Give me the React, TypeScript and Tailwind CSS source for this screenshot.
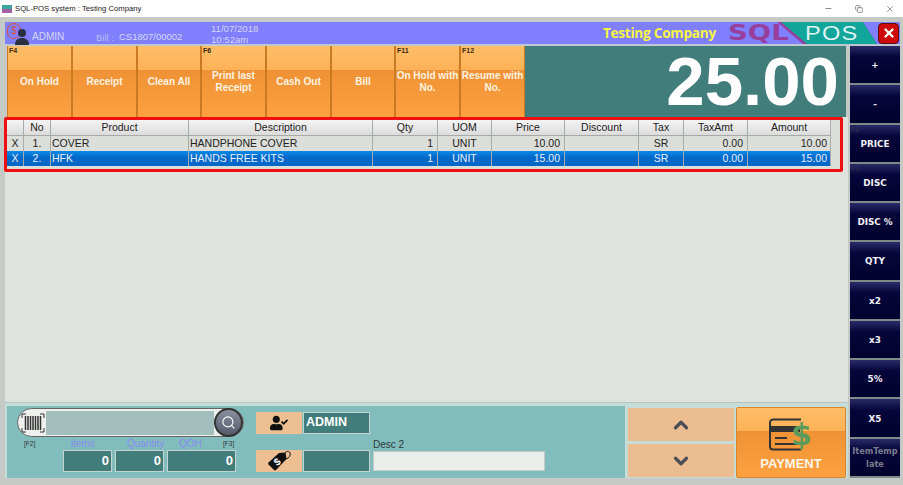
import { ChevronDown, ChevronUp, Copy, Minus, Search, X } from 'lucide-react';
import { FaUserCheck } from 'react-icons/fa';

const orangeButtons = [
  { key: 'F4', label: 'On Hold', w: 'w-[65px]' },
  { key: '', label: 'Receipt', w: 'w-[65px]' },
  { key: '', label: 'Clean All', w: 'w-[64px]' },
  { key: 'F6', label: 'Print last Receipt', w: 'w-[65px]' },
  { key: '', label: 'Cash Out', w: 'w-[65px]' },
  { key: '', label: 'Bill', w: 'w-[64px]' },
  { key: 'F11', label: 'On Hold with No.', w: 'w-[65px]' },
  { key: 'F12', label: 'Resume with No.', w: 'w-[65px]' },
];

const sideButtons = [
  { key: '', label: '+' },
  { key: '', label: '-' },
  { key: 'F8', label: 'PRICE' },
  { key: 'F9', label: 'DISC' },
  { key: '', label: 'DISC %' },
  { key: '', label: 'QTY' },
  { key: '', label: 'x2' },
  { key: '', label: 'x3' },
  { key: '', label: '5%' },
  { key: '', label: 'X5' },
];

const columns = [
  { title: '', align: 'text-center' },
  { title: 'No', align: 'text-center' },
  { title: 'Product', align: 'text-left pl-[1px]' },
  { title: 'Description', align: 'text-left pl-[1px]' },
  { title: 'Qty', align: 'text-right pr-[4px]' },
  { title: 'UOM', align: 'text-center' },
  { title: 'Price', align: 'text-right pr-[4px]' },
  { title: 'Discount', align: 'text-right pr-[4px]' },
  { title: 'Tax', align: 'text-center' },
  { title: 'TaxAmt', align: 'text-right pr-[4px]' },
  { title: 'Amount', align: 'text-right pr-[3px]' },
];

const rows = [
  ['X', '1.', 'COVER', 'HANDPHONE COVER', '1', 'UNIT', '10.00', '', 'SR', '0.00', '10.00'],
  ['X', '2.', 'HFK', 'HANDS FREE KITS', '1', 'UNIT', '15.00', '', 'SR', '0.00', '15.00'],
];

const gridCols = 'grid w-[824px] grid-cols-[17px_27px_138px_184px_65px_54px_73px_74px_45px_64px_83px]';

function OrangeButton({ k, label, w }: { k: string; label: string; w: string }) {
  return (
    <div className={`${w} relative h-full flex items-center justify-center text-center border-x border-[#c97a22] bg-[linear-gradient(#ffbe68,#ffb257_34%,#ee9235_34%,#fea141)]`}>
      {k && <span className="absolute left-px top-0 text-[7px] leading-[9px] font-bold text-[#3a2a10]">{k}</span>}
      <span className="text-[10px] leading-[12px] font-bold text-[#fdf3e2]">{label}</span>
    </div>
  );
}

function SideButton({ k, label, muted }: { k: string; label: string; muted?: boolean }) {
  return (
    <div className="relative flex-1 flex items-center justify-center text-center pt-[2px] border-b-2 border-[#7c8b88] bg-[linear-gradient(#2a2a68,#05053a_30%,#02022e)]">
      {k && <span className="absolute left-px top-0 text-[7px] leading-[9px] text-[#34344e]">{k}</span>}
      <span className={`leading-[13px] font-bold font-['DejaVu_Sans',sans-serif] ${muted ? 'text-[8.2px] text-[#7c7c8c]' : 'text-[8.8px] text-[#f1f1f6]'}`}>{label}</span>
    </div>
  );
}

function BarcodeIcon() {
  return (
    <svg width="24" height="20" viewBox="0 0 24 20" fill="none" stroke="#333">
      <path d="M1 5V1h4M19 1h4v4M1 15v4h4M19 19h4v-4" strokeWidth="1" />
      <path d="M4.5 3v14M7 3v14M9.5 3v14M12 3v14M14.5 3v14M17 3v14M19.5 3v14" strokeWidth="1.5" />
    </svg>
  );
}

function PriceTagIcon() {
  return (
    <svg width="24" height="22" viewBox="0 0 24 22">
      <path d="M1.5 12.5 12 3l6.5-.5 1 6.5L9 20a1.5 1.5 0 0 1-2 0L1.5 14.5a1.5 1.5 0 0 1 0-2Z" fill="#111" />
      <path d="M16 6c2-5 6-6 7-3s-2 6-5 6" fill="none" stroke="#111" strokeWidth="1" />
      <text x="7.5" y="15" fontSize="10" fontWeight="700" fill="#fff" fontFamily="Liberation Sans, sans-serif" transform="rotate(-40 10.5 12)">$</text>
    </svg>
  );
}

function CardIcon() {
  return (
    <svg width="44" height="33" viewBox="0 0 44 33" fill="none">
      <path d="M32 1.5H4a3 3 0 0 0-3 3v24a3 3 0 0 0 3 3h28" stroke="#333" strokeWidth="2" />
      <rect x="1" y="8" width="30" height="6" fill="#333" />
      <path d="M6 20h12M6 26h24" stroke="#333" strokeWidth="2.2" />
      <text x="22" y="27" fontSize="30" fontWeight="700" fill="#5c9a5c" fontFamily="DejaVu Sans, sans-serif">$</text>
    </svg>
  );
}

function UserBadge() {
  return (
    <div className="relative w-[24px] h-[23px] shrink-0">
      <div className="absolute left-0 top-px w-[14px] h-[16px] rounded-full border border-[#d9553a] text-[10px] leading-[14px] text-center text-[#d9553a]">$</div>
      <svg className="absolute left-[8px] top-[6px]" width="14" height="17" viewBox="0 0 14 17">
        <circle cx="7" cy="5" r="4" fill="#2b3040" />
        <path d="M0 17c0-5 3-7 7-7s7 2 7 7Z" fill="#2b3040" />
      </svg>
    </div>
  );
}

function CountBox({ value, w }: { value: string; w: string }) {
  return (
    <div className={`${w} h-[22px] bg-[#417d7b] border border-[#c5d3d0] flex items-center justify-end pr-[2px] text-[13px] font-bold text-white`}>
      {value}
    </div>
  );
}

export default function App() {
  return (
    <div className="w-[903px] h-[485px] bg-white flex flex-col overflow-hidden font-['Liberation_Sans',Arial,sans-serif]">
      {/* title bar */}
      <div className="h-[17px] shrink-0 flex items-center pl-[2px] bg-white">
        <div className="w-[10px] h-[8px] mr-[3px] bg-[linear-gradient(#3aa6a0_50%,#a060a8_50%)]" />
        <span className="text-[7.7px] text-[#222]">SQL-POS system : Testing Company</span>
        <div className="ml-auto flex items-center gap-[22px] pr-[8px] text-[#333]">
          <Minus size={9} strokeWidth={1.5} />
          <Copy size={8} strokeWidth={1.5} />
          <X size={10} strokeWidth={1.2} />
        </div>
      </div>

      {/* window */}
      <div className="flex-1 flex flex-col bg-[#c6cac7] pt-[5px] pb-[7px] pl-[5px] pr-[3px] min-h-0">
        {/* blue header */}
        <div className="h-[23px] shrink-0 flex items-center bg-[#7f7fff] text-[#d6d6f8] pl-[2px] pr-[1px] border-b border-[#b7c6dc]">
          <UserBadge />
          <span className="ml-px mt-[8px] w-[30px] text-[10px] leading-[12px]">ADMIN</span>
          <span className="ml-[34px] mt-[9px] w-[17px] text-[9.5px] leading-[12px] text-[#bdbdf0] whitespace-nowrap">Bill :</span>
          <span className="ml-[6px] mt-[8px] w-[92px] text-[9.5px] leading-[12px]">CS1807/00002</span>
          <div className="text-[9.6px] leading-[11px] mt-[2px]">
            <div>11/07/2018</div>
            <div>10:52am</div>
          </div>
          <span className="ml-auto mr-[12px] text-[13.7px] font-bold text-[#f5f542] font-['Open_Sans',sans-serif] tracking-[-0.3px]">Testing Company</span>
          <div className="flex items-center mr-[1px] h-[22px]">
            <span className="relative z-10 w-[49px] origin-left scale-x-[1.25] text-[22px] font-bold text-[#983f9c] leading-[22px] whitespace-nowrap font-['DejaVu_Sans',sans-serif]">SQL</span>
            <div className="h-[22px] w-[100px] bg-[#983f9c] [clip-path:polygon(0_0,86%_0,100%_100%,26%_100%)]">
              <div className="h-full w-full pl-[28px] flex items-center bg-[#12a59a] [clip-path:polygon(4%_0,100%_0,100%_100%,30%_100%)]">
                <span className="origin-left scale-x-[1.18] text-[20px] leading-[22px] text-[#dff3f3] tracking-[1px]">POS</span>
              </div>
            </div>
          </div>
          <div className="w-[21px] h-[21px] rounded-[4px] bg-[#cf0a0a] border border-[#5a1010] flex items-center justify-center text-white">
            <X size={14} strokeWidth={4} />
          </div>
        </div>

        <div className="flex-1 flex min-h-0 gap-[2px] pt-px">
          {/* main column */}
          <div className="w-[843px] flex flex-col">
            {/* buttons and total */}
            <div className="h-[71px] shrink-0 flex pl-[2px] pr-[2px]">
              {orangeButtons.map((b) => (
                <OrangeButton key={b.label} k={b.key} label={b.label} w={b.w} />
              ))}
              <div className="flex-1 bg-[#417d7b] flex items-center justify-end pr-[7px]">
                <span className="text-[69px] leading-[71px] font-bold text-white">25.00</span>
              </div>
            </div>

            {/* item area */}
            <div className="flex-1 bg-[#e0e2dd] border-b border-[#b8c4c0] min-h-0">
              <div className="-ml-px border-[3px] border-[#ee1010] rounded-[2px] w-[839px] h-[55px] bg-[#dcdeda] text-[10.5px] leading-[15px] text-[#222]">
                <div className={`${gridCols} h-[16px] border-b border-[#a8aaa8] bg-[linear-gradient(#f4f4f4,#dcdcdc)]`}>
                  {columns.map((c, i) => (
                    <div key={i} className="border-r border-[#a8aca8] text-center">
                      {c.title}
                    </div>
                  ))}
                </div>
                {rows.map((r, ri) => (
                  <div key={ri} className={`${gridCols} h-[15px] ${ri === 1 ? 'bg-[linear-gradient(#0a8ae8,#0468c8_45%,#0468c8)] text-[#e6f0fa]' : 'bg-[#dcdeda]'}`}>
                    {r.map((v, i) => (
                      <div key={i} className={`${columns[i].align} border-r border-[#a8aca8] whitespace-nowrap`}>
                        {v}
                      </div>
                    ))}
                  </div>
                ))}
              </div>
            </div>

            {/* bottom bar */}
            <div className="h-[75px] shrink-0 pt-[3px] flex gap-[3px] pl-[2px] bg-[#c5dcd9]">
              <div className="w-[618px] h-[72px] bg-[#81bdbc] flex pl-[10px] pt-[2px]">
                <div className="w-[227px] shrink-0">
                  <div className="h-[29px] rounded-full bg-[#eef0ee] border border-[#666] flex items-center pl-[3px]">
                    <BarcodeIcon />
                    <div className="ml-px w-[168px] h-[24px] bg-[#a3bfbd]" />
                    <div className="ml-auto w-[29px] h-[29px] rounded-full bg-[linear-gradient(#8a90a0,#565b6a)] border-[2px] border-[#333] flex items-center justify-center text-white">
                      <Search size={15} strokeWidth={1.8} />
                    </div>
                  </div>
                  <div className="flex h-[13px] items-center">
                    <span className="ml-[7px] w-[47px] text-[6.5px] leading-[8px] text-[#333]">[F2]</span>
                    <span className="w-[56px] text-[10px] leading-[12px] text-[#8a8af0]">items</span>
                    <span className="w-[52px] text-[10px] leading-[12px] text-[#8a8af0]">Quantity</span>
                    <span className="w-[44px] text-[10px] leading-[12px] text-[#8a8af0]">QOH</span>
                    <span className="text-[6.5px] leading-[8px] text-[#333]">[F3]</span>
                  </div>
                  <div className="flex gap-[3px] pl-[46px]">
                    <CountBox value="0" w="w-[49px]" />
                    <CountBox value="0" w="w-[49px]" />
                    <CountBox value="0" w="w-[69px]" />
                  </div>
                </div>

                <div className="ml-[12px] w-[115px] shrink-0 flex flex-col pt-[4px]">
                  <div className="flex">
                    <div className="w-[46px] h-[22px] bg-[#edbf93] flex items-center justify-center text-[#111]">
                      <FaUserCheck size={18} />
                    </div>
                    <div className="ml-px w-[67px] h-[22px] bg-[#417d7b] border border-[#c5d3d0] pl-[2px] text-[12.5px] leading-[18px] font-bold text-white">ADMIN</div>
                  </div>
                  <div className="flex mt-[16px]">
                    <div className="w-[46px] h-[22px] bg-[#edbf93] flex items-center justify-center">
                      <PriceTagIcon />
                    </div>
                    <div className="ml-px w-[67px] h-[22px] bg-[#417d7b] border border-[#c5d3d0]" />
                  </div>
                </div>

                <div className="ml-[2px] w-[172px] pt-[31px]">
                  <div className="text-[10px] leading-[12px] text-[#2c3a3a]">Desc 2</div>
                  <div className="h-[20px] bg-[#e9eeea] border border-[#c4cac6]" />
                </div>
              </div>

              <div className="w-[106px] flex flex-col gap-[3px] pt-[2px]">
                <div className="h-[33px] bg-[#ecbd91] flex items-center justify-center text-[#4a4f55]">
                  <ChevronUp size={22} strokeWidth={3.5} />
                </div>
                <div className="h-[33px] bg-[#ecbd91] flex items-center justify-center text-[#4a4f55]">
                  <ChevronDown size={22} strokeWidth={3.5} />
                </div>
              </div>

              <div className="-ml-px w-[110px] h-[71px] mt-px flex flex-col items-center border border-[#d8852c] rounded-[2px] bg-[linear-gradient(#ffbe68,#fdb258_33%,#ee9235_33%,#fea141)]">
                <div className="mt-[10px]"><CardIcon /></div>
                <span className="mt-[5px] text-[13px] leading-[15px] font-bold text-[#fdf6ea]">PAYMENT</span>
              </div>
            </div>
          </div>

          {/* side column */}
          <div className="w-[50px] flex flex-col">
            {sideButtons.map((b) => (
              <SideButton key={b.label} k={b.key} label={b.label} />
            ))}
            <SideButton k="" label="ItemTemp late" muted />
          </div>
        </div>
      </div>
    </div>
  );
}
